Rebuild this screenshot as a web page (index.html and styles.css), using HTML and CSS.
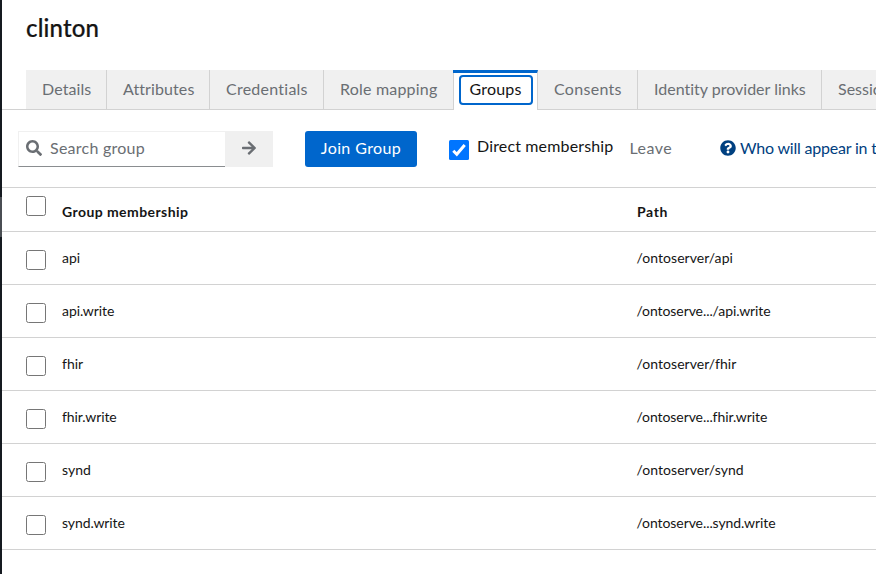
FILE: index.html
```html
<!DOCTYPE html>
<html lang="en">
<head>
<meta charset="utf-8">
<title>clinton</title>
<link rel="stylesheet" href="styles.css">
</head>
<body>
<div class="app">
  <aside class="rail"><span class="current"></span></aside>
  <main class="page">
    <h1>clinton</h1>
    <nav class="tabs">
      <a class="tab details">Details</a>
      <a class="tab attributes">Attributes</a>
      <a class="tab credentials">Credentials</a>
      <a class="tab roles">Role mapping</a>
      <a class="tab groups active"><span>Groups</span></a>
      <a class="tab consents">Consents</a>
      <a class="tab idp">Identity provider links</a>
      <a class="tab sessions">Sessions</a>
    </nav>
    <div class="toolbar">
      <div class="search">
        <div class="field">
          <svg width="16" height="16" viewBox="0 0 512 512"><path fill="currentColor" d="M505 442.700 405.300 343c-4.500-4.500-10.600-7-17-7H372c27.600-35.300 44-79.700 44-128C416 93.100 322.900 0 208 0S0 93.100 0 208s93.100 208 208 208c48.300 0 92.700-16.400 128-44v16.300c0 6.400 2.500 12.500 7 17l99.700 99.700c9.400 9.400 24.600 9.400 33.900 0l28.300-28.300c9.400-9.400 9.400-24.600.1-34zM208 336c-70.700 0-128-57.200-128-128 0-70.700 57.200-128 128-128 70.700 0 128 57.200 128 128 0 70.700-57.200 128-128 128z"/></svg>
          <span>Search group</span>
        </div>
        <div class="go">
          <svg width="14" height="16" viewBox="0 0 448 512"><path fill="currentColor" d="M190.500 66.900l22.200-22.200c9.400-9.400 24.600-9.400 33.900 0L441 239c9.400 9.400 9.400 24.600 0 33.900L246.600 467.300c-9.400 9.400-24.600 9.400-33.900 0l-22.200-22.200c-9.500-9.500-9.300-25 .4-34.300L311.400 296H24c-13.300 0-24-10.700-24-24v-32c0-13.300 10.700-24 24-24h287.400L190.900 101.200c-9.800-9.300-10-24.800-.4-34.300z"/></svg>
        </div>
      </div>
      <button class="join">Join Group</button>
      <div class="direct">
        <svg class="checked" width="20" height="20" viewBox="0 0 20 20"><rect width="20" height="20" rx="1.500" fill="#0075ff"/><path d="M4.300 10.700 7.800 14.200 15.700 5" fill="none" stroke="#fff" stroke-width="3"/></svg>
        <span>Direct membership</span>
      </div>
      <span class="leave">Leave</span>
      <a class="who">
        <svg width="16" height="16" viewBox="0 0 512 512"><path fill="currentColor" d="M504 256c0 137-111 248-248 248S8 393 8 256C8 119.100 119 8 256 8s248 111.100 248 248zM262.700 90c-54.500 0-89.300 23-116.500 63.800-3.500 5.300-2.400 12.400 2.700 16.300l34.700 26.300c5.200 3.900 12.600 3 16.700-2.100 17.900-22.700 30.100-35.800 57.300-35.800 20.400 0 45.700 13.100 45.700 33 0 15-12.400 22.700-32.500 34C247.100 238.500 216 254.900 216 296v4c0 6.600 5.400 12 12 12h56c6.600 0 12-5.400 12-12v-1.300c0-28.500 83.200-29.600 83.200-106.700 0-58-60.200-102-116.500-102zM256 338c-25.400 0-46 20.600-46 46s20.600 46 46 46 46-20.600 46-46-20.600-46-46-46z"/></svg>
        <span>Who will appear in this group list?</span>
      </a>
    </div>
    <div class="table">
      <div class="row head"><i class="box"></i><b class="gm">Group membership</b><b>Path</b></div>
      <div class="row"><i class="box"></i><span>api</span><span class="path">/ontoserver/api</span></div>
      <div class="row"><i class="box"></i><span class="tight">api.write</span><span class="path tight">/ontoserve.../api.write</span></div>
      <div class="row"><i class="box"></i><span>fhir</span><span class="path">/ontoserver/fhir</span></div>
      <div class="row"><i class="box"></i><span class="tight">fhir.write</span><span class="path tight">/ontoserve...fhir.write</span></div>
      <div class="row"><i class="box"></i><span>synd</span><span class="path">/ontoserver/synd</span></div>
      <div class="row"><i class="box"></i><span class="tight">synd.write</span><span class="path tight">/ontoserve...synd.write</span></div>
    </div>
  </main>
</div>
</body>
</html>
```
FILE: styles.css
```css
* { box-sizing: border-box; }
body { margin: 0; overflow: hidden; background: #fff; color: #151515; font: 16px/24px Lato, "Liberation Sans", sans-serif; font-variant-ligatures: none; }
svg { display: block; flex: none; }
.app { display: flex; width: 876px; height: 574px; overflow: hidden; }
.rail { width: 2px; flex: none; background: #151a20; padding-top: 197px; }
.current { display: block; height: 40px; background: #4a4e53; }
.page { width: 874px; flex: none; overflow: hidden; }
h1 { margin: 0; padding: 12px 0 0 24px; height: 70px; font-size: 24px; line-height: 32px; font-weight: 500; letter-spacing: .15px; -webkit-text-stroke: .2px; }
.tabs { display: flex; height: 40px; padding-left: 24px; width: 1000px; background: linear-gradient(#d2d2d2, #d2d2d2) left bottom / 100% 1px no-repeat; }
.tab { flex: none; height: 40px; padding: 7px 0 0 16px; background: #f0f0f0; border-right: 1px solid #d2d2d2; border-bottom: 1px solid #d2d2d2; color: #6a6e73; white-space: nowrap; }
.details { width: 81px; letter-spacing: .1px; }
.attributes { width: 103px; letter-spacing: .1px; }
.credentials { width: 114px; letter-spacing: .25px; }
.roles { width: 129px; letter-spacing: .2px; border-right: 0; }
.groups { width: 85px; letter-spacing: .2px; }
.consents { width: 100px; letter-spacing: .3px; }
.idp { width: 184px; }
.sessions { width: 100px; }
.tab.active { padding: 2px 4px 0 6px; background: linear-gradient(#d2d2d2, #d2d2d2) left / 1px 100% no-repeat #fff; border-top: 3px solid #06c; border-bottom: 0; color: #151515; }
.active span { display: block; height: 30px; padding: 0 0 0 8.500px; border: 2px solid #06c; border-radius: 4px; }
.toolbar { display: flex; align-items: flex-start; height: 77px; padding: 21px 0 0 16px; white-space: nowrap; }
.toolbar > * { flex: none; }
.search { display: flex; width: 255px; height: 36px; margin-right: 32px; color: #6a6e73; letter-spacing: .25px; }
.field { display: flex; flex: none; width: 207px; padding: 4px 0 0 7px; gap: 8px; border: 1px solid #f0f0f0; border-right: 0; border-bottom-color: #8a8d90; }
.field svg { margin-top: 4px; }
.go { display: flex; flex: none; width: 48px; padding-bottom: 2px; align-items: center; justify-content: center; background: #f0f0f0; }
.join { width: 112px; height: 36px; margin-right: 32px; padding: 0 0 2px; border: 0; border-radius: 3px; background: #06c; color: #fff; font: inherit; letter-spacing: .4px; }
.direct { display: flex; width: 180px; gap: 8px; letter-spacing: .15px; }
.direct svg { margin-top: 9px; }
.direct span { margin-top: 3px; }
.leave { width: 91px; padding: 5px 0 0 .5px; color: #6a6e73; letter-spacing: .45px; }
.who { display: flex; gap: 4px; padding-top: 5px; color: #004080; letter-spacing: -.2px; }
.who svg { margin-top: 4px; }
.table { border-top: 1px solid #d2d2d2; font-size: 14px; line-height: 21px; }
.row { display: grid; grid-template-columns: 36px 575px 1fr; height: 53px; padding: 15px 0 0 24px; border-bottom: 1px solid #d2d2d2; white-space: nowrap; }
.head { height: 44px; padding-top: 13px; }
.gm { letter-spacing: .43px; }
.head b:last-child { letter-spacing: .6px; }
.path { margin-left: -.5px; letter-spacing: .05px; }
.tight { letter-spacing: -.08px; }
.box { width: 20px; height: 20px; margin-top: 3px; border: 1px solid #767676; border-radius: 2.500px; }
.head .box { margin-top: -5px; }
```
